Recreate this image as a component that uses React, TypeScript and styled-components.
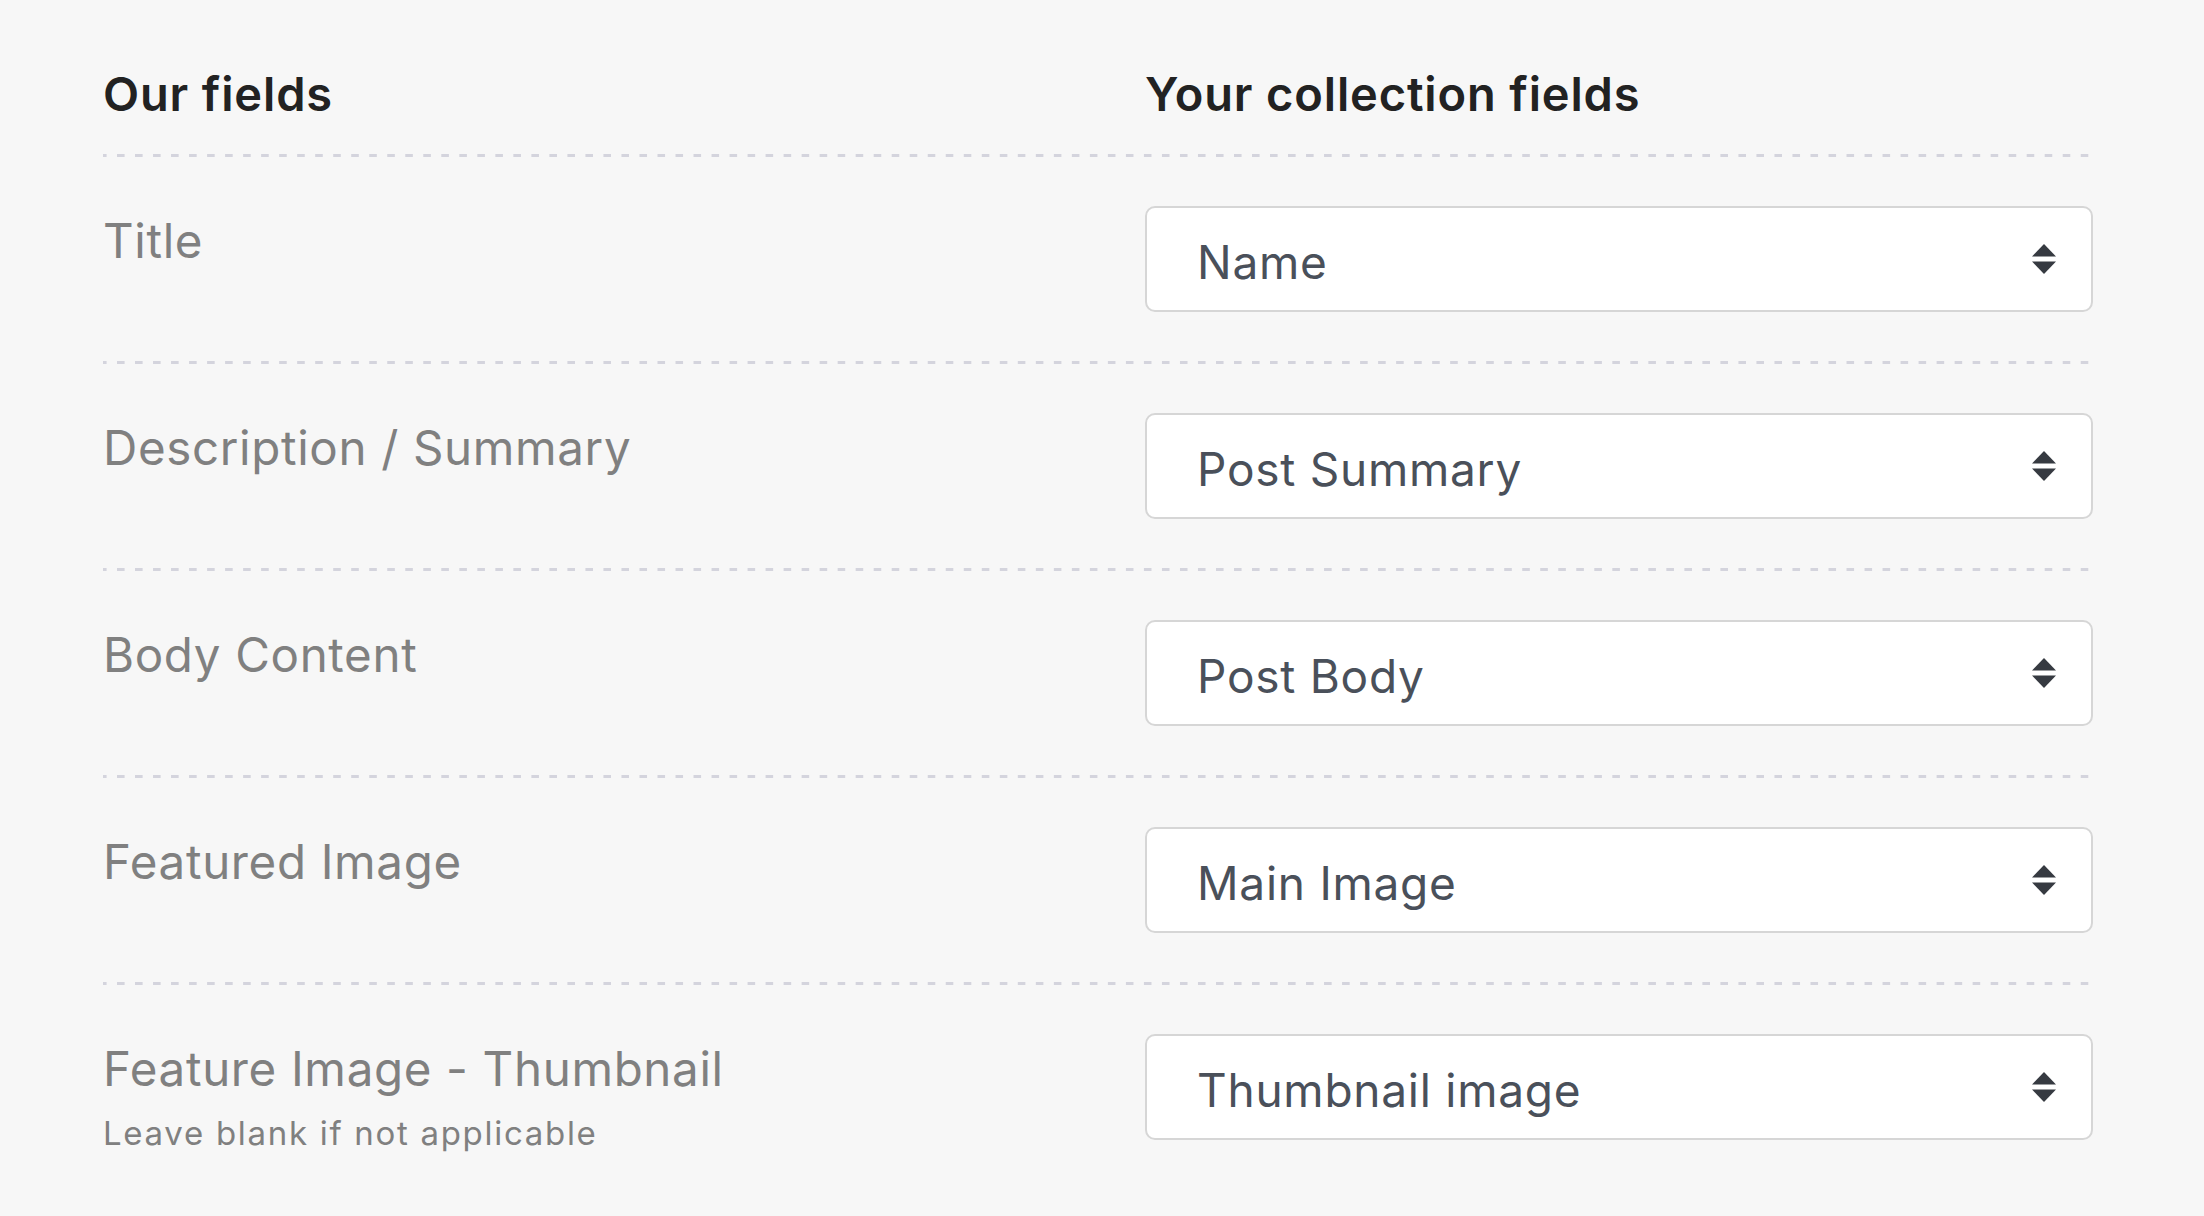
import React from "react";
import styled, { createGlobalStyle } from "styled-components";

const GlobalStyle = createGlobalStyle`
  html, body {
    margin: 0;
    padding: 0;
    background: #f7f7f7;
  }
  body {
    font-family: Inter, "Noto Sans", "Liberation Sans", sans-serif;
    -webkit-font-smoothing: antialiased;
  }
`;

const Page = styled.main`
  box-sizing: border-box;
  width: 2204px;
  min-height: 1216px;
  padding: 66px 109px 40px 103px;
  background: #f7f7f7;
`;

const Table = styled.section`
  width: 1992px;
  display: flex;
  flex-direction: column;
`;

const Grid = styled.div`
  display: grid;
  grid-template-columns: 1042px 948px;
  align-items: start;
`;

const HeaderRow = styled(Grid)`
  padding-bottom: 32px;
`;

const HeaderCell = styled.h2`
  margin: 0;
  font-size: 47px;
  line-height: 1.2;
  font-weight: 600;
  color: #222222;
  letter-spacing: 0.85px;
`;

const Divider = styled.div`
  height: 3px;
  background-image: linear-gradient(to right, #d4d4dd 8px, transparent 8px);
  background-size: 18.03px 3px;
  background-position: -4px 0;
  background-repeat: repeat-x;
`;

const Row = styled(Grid)`
  padding: 49px 0 49px;
`;

const LabelCell = styled.div`
  display: flex;
  flex-direction: column;
  padding-top: 6px;
`;

const Label = styled.div`
  font-size: 47.5px;
  line-height: 1.2;
  color: #808080;
  letter-spacing: 0.65px;
`;

const Hint = styled.div`
  margin-top: 17px;
  font-size: 33px;
  line-height: 1.2;
  color: #808080;
  letter-spacing: 1.7px;
`;

const SelectBox = styled.div`
  box-sizing: border-box;
  height: 106px;
  width: 948px;
  border: 2px solid #d6d6d6;
  border-radius: 10px;
  background: #ffffff;
  display: flex;
  align-items: center;
  justify-content: space-between;
  padding: 7px 35px 0 50px;
  cursor: pointer;
`;

const SelectValue = styled.span`
  font-size: 46px;
  line-height: 1.2;
  color: #4a505a;
  letter-spacing: 0.75px;
`;

const ArrowIcon = styled.svg`
  width: 24px;
  height: 30px;
  flex: none;
  margin-top: -8px;
`;

const Arrows = () => (
  <ArrowIcon viewBox="0 0 24 30" aria-hidden="true">
    <polygon points="12,0 24,12.5 0,12.5" fill="#363a41" />
    <polygon points="0,17.5 24,17.5 12,30" fill="#363a41" />
  </ArrowIcon>
);

type Mapping = { label: string; hint?: string; value: string };

const mappings: Mapping[] = [
  { label: "Title", value: "Name" },
  { label: "Description / Summary", value: "Post Summary" },
  { label: "Body Content", value: "Post Body" },
  { label: "Featured Image", value: "Main Image" },
  {
    label: "Feature Image - Thumbnail",
    hint: "Leave blank if not applicable",
    value: "Thumbnail image",
  },
];

export default function App() {
  return (
    <>
      <GlobalStyle />
      <Page>
        <Table>
          <HeaderRow>
            <HeaderCell>Our fields</HeaderCell>
            <HeaderCell>Your collection fields</HeaderCell>
          </HeaderRow>
          {mappings.map((m) => (
            <React.Fragment key={m.label}>
              <Divider />
              <Row>
                <LabelCell>
                  <Label>{m.label}</Label>
                  {m.hint && <Hint>{m.hint}</Hint>}
                </LabelCell>
                <SelectBox role="combobox" aria-label={m.label}>
                  <SelectValue>{m.value}</SelectValue>
                  <Arrows />
                </SelectBox>
              </Row>
            </React.Fragment>
          ))}
        </Table>
      </Page>
    </>
  );
}
